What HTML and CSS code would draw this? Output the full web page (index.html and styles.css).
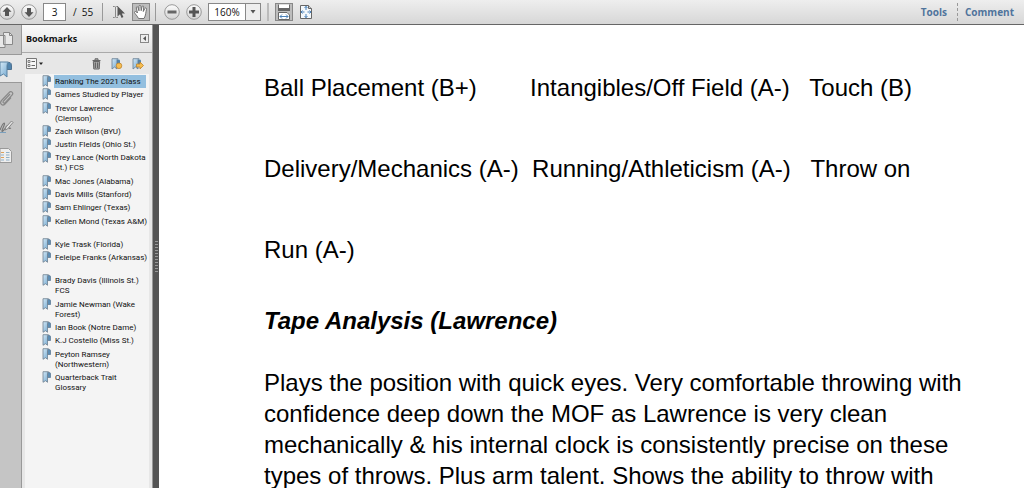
FILE: index.html
```html
<!DOCTYPE html>
<html lang="en">
<head>
<meta charset="utf-8">
<title>Quarterback Guide</title>
<link rel="stylesheet" href="styles.css">
</head>
<body>
<svg class="defs" aria-hidden="true">
  <defs>
    <linearGradient id="blue" x1="0" x2="1" y2="1"><stop offset="0" stop-color="#d5e9f6"/><stop offset="1" stop-color="#6fa6cf"/></linearGradient>
    <linearGradient id="disc" x2="0" y2="1"><stop offset="0" stop-color="#fdfdfd"/><stop offset="1" stop-color="#d2d2d2"/></linearGradient>
    <symbol id="mark" viewBox="0 0 9 12"><path d="M5.500 1.500h2q1 0 1 1.500v3.500H5.500z" fill="#5d8db4" stroke="#55748f" stroke-width=".7"/><path d="M1 .7h5.500q-1 .5-1 2v8.600L3.500 9.700 1 11.300z" fill="url(#blue)" stroke="#6d7f8f" stroke-width=".8"/></symbol>
  </defs>
</svg>
<header class="toolbar">
  <div class="group nav">
    <button class="tool" aria-label="Previous page"><svg width="16" height="16" viewBox="0 0 16 16"><circle cx="8" cy="8" r="7.300" fill="url(#disc)" stroke="#999"/><path d="M8 3l4.500 4.800H10V12H6V7.800H3.500z" fill="#555"/></svg></button>
    <button class="tool" aria-label="Next page"><svg width="16" height="16" viewBox="0 0 16 16"><circle cx="8" cy="8" r="7.300" fill="url(#disc)" stroke="#999"/><path d="M8 13l4.500-4.800H10V4H6v4.200H3.500z" fill="#555"/></svg></button>
  </div>
  <input class="field page-no" aria-label="Page number" value="3">
  <span class="count">/&nbsp; 55</span>
  <span class="sep"></span>
  <div class="group modes">
    <button class="tool" aria-label="Select text"><svg width="16" height="16" viewBox="0 0 16 16"><path d="M1 2.500h1.500L3.500 3l1-.5H6M3.500 3v10M1 13.500h1.500l1-.5 1 .5H6" fill="none" stroke="#888"/><path d="M5.500 2v10.500L8 10.300l1.600 3.600 1.800-.8-1.600-3.500h3.200z" fill="#555"/></svg></button>
    <button class="tool pressed" aria-label="Hand tool"><svg width="16" height="16" viewBox="0 0 16 16"><path d="M5.500 14.500C4.500 12 2 10 1.500 8.500c0-1.500 1.500-1.300 3 .5L3.300 4c-.2-1.500 1.300-1.700 1.700-.5l1 3.300L6 2.300c0-1.300 1.700-1.300 1.800 0l.4 4.400.8-4c.3-1.200 1.900-.9 1.700.4L10.300 7.500l1.600-3c.6-1.100 2-.4 1.600.8-.8 2.500-.5 6-2.500 9.200z" fill="#fff" stroke="#666" stroke-width=".9"/></svg></button>
  </div>
  <span class="sep"></span>
  <div class="group zooms">
    <button class="tool" aria-label="Zoom out"><svg width="16" height="16" viewBox="0 0 16 16"><circle cx="8" cy="8" r="7.300" fill="url(#disc)" stroke="#999"/><path d="M3.500 6.500h9v3h-9z" fill="#666"/></svg></button>
    <button class="tool" aria-label="Zoom in"><svg width="16" height="16" viewBox="0 0 16 16"><circle cx="8" cy="8" r="7.300" fill="url(#disc)" stroke="#999"/><path d="M3 6.500h3.500V3h3v3.500H13v3H9.500V13h-3V9.500H3z" fill="#555"/></svg></button>
  </div>
  <div class="combo">
    <input class="field zoom" aria-label="Zoom level" value="160%">
    <button class="drop" aria-label="Zoom levels"><svg width="6" height="4" viewBox="0 0 6 4"><path d="M.5 0h5L3 3.500z" fill="#555"/></svg></button>
  </div>
  <span class="sep wide"></span>
  <div class="group fits">
    <button class="tool pressed" aria-label="Fit width"><svg width="16" height="16" viewBox="0 0 16 16"><path d="M2.500.5v5h11v-5M2.500 15.500v-7h8.500l2.500 2.500v4.500z" fill="#fff" stroke="#666"/><path d="M2 4h12v3H2z" fill="#666"/><path d="M4 12.500h8M6 10.500l-2 2 2 2M10 10.500l2 2-2 2" fill="none" stroke="#4b81b8"/></svg></button>
    <button class="tool" aria-label="Fit page"><svg width="14" height="16" viewBox="0 0 14 16"><path d="M1.500 1.500h8l3 3v10h-11z" fill="#f4f8fb" stroke="#666"/><path d="M9.500 1.500v3h3" fill="#ccc" stroke="#666"/><path d="M7 2v4M7 10v4M2 8h3.500M8.500 8H12M5.500 4L7 2.500 8.500 4M5.500 12L7 13.500 8.500 12M3.500 6.500L2 8l1.500 1.500M10.500 6.500L12 8l-1.500 1.500" fill="none" stroke="#4b81b8"/></svg></button>
  </div>
  <nav class="panes"><a href="#tools">Tools</a><a href="#comment">Comment</a></nav>
</header>
<main class="workspace">
  <nav class="rail" aria-label="Panels">
    <button class="tab" aria-label="Pages"><svg width="14" height="18" viewBox="0 0 14 18"><path d="M0 4.500h5v12H0M3.500 1.500h6l3 3v9h-9z" fill="#e8e8e8" stroke="#888"/><path d="M9.500 1.500v3h3" fill="none" stroke="#888"/></svg></button>
    <button class="tab current" aria-label="Bookmarks"><svg width="14" height="18" viewBox="0 0 14 18"><path d="M7 2.500h3Q11.500 3 11.500 6v3.500H7z" fill="#5184ad" stroke="#4d7191"/><path d="M0 2h8.500Q7 3 7 6v11l-3.500-3L0 16z" fill="url(#blue)" stroke="#5a82a2"/></svg></button>
    <button class="tab" aria-label="Attachments"><svg width="14" height="18" viewBox="0 0 14 18"><path d="M10 5L3.500 12c-1.200 1.500.4 3 1.700 1.600L12 6.200c2-2.200-.8-5-3-2.600L1.500 11.500c-2.500 3 1 6 3.500 3.500L11 8.500" fill="none" stroke="#888" stroke-width="1.200"/></svg></button>
    <button class="tab" aria-label="Signatures"><svg width="14" height="18" viewBox="0 0 14 18"><path d="M0 12C4 2 6 4 3 10s1 3 3-1 2 3 5 1" fill="none" stroke="#777" stroke-width="1.200"/><path d="M5 12l1-3 5.500-6L13 4.500 7.500 11z" fill="#e2e2e2" stroke="#888"/><path d="M0 14.500h6" stroke="#7ba0bd"/></svg></button>
    <button class="tab" aria-label="Content"><svg width="14" height="18" viewBox="0 0 14 18"><path d="M0 1.500h8.500l3 3v11H0z" fill="#eee" stroke="#999"/><path d="M1 5.500h3M1 10.500h3" stroke="#dda15c"/><path d="M6 5.500h3.500M6 8h3.500M6 10.500h3.500M6 13h3.500M1 8h3M1 13h3" stroke="#8fb0c8"/></svg></button>
  </nav>
  <aside class="panel">
    <div class="panel-head"><h2>Bookmarks</h2><button class="collapse" aria-label="Collapse panel"><svg width="3" height="5" viewBox="0 0 3 5"><path d="M3 0v5L0 2.500z" fill="#555"/></svg></button></div>
    <div class="panel-tools">
      <button class="tool options" aria-label="Options"><svg width="17" height="11" viewBox="0 0 17 11"><path d="M.5.500h10v10H.5z" fill="#f7f7f7" stroke="#777"/><path d="M2 2.500h2v2H2zM2 6.500h2v2H2z" fill="none" stroke="#666" stroke-width=".8"/><path d="M5.500 3.500H9M5.500 7.500H9" stroke="#666"/><path d="M13 4.500h4l-2 2.500z" fill="#222"/></svg></button>
      <button class="tool" aria-label="Delete bookmark"><svg width="12" height="12" viewBox="0 0 12 12"><path d="M2.500 2.500h8M5 2V.8h3V2M3.300 3.500l.5 7.500h5.400l.5-7.500z" fill="#aaa" stroke="#666"/><path d="M5.300 4.500V10M7.700 4.500V10" stroke="#555"/></svg></button>
      <button class="tool" aria-label="New bookmark"><svg width="12" height="12" viewBox="0 0 12 12"><path d="M6 1.500h2q1 0 1 1.500v3H6z" fill="#5283ab"/><path d="M1 .7h6q-1 .5-1 2V11L3.500 9 1 11z" fill="url(#blue)" stroke="#657c90" stroke-width=".8"/><circle cx="8" cy="7.800" r="2.800" fill="#f6bd4f" stroke="#bd8430" stroke-width=".8"/></svg></button>
      <button class="tool" aria-label="Go to bookmark"><svg width="12" height="12" viewBox="0 0 12 12"><path d="M6 1.500h2q1 0 1 1.500v3H6z" fill="#5283ab"/><path d="M1 .7h6q-1 .5-1 2V11L3.500 9 1 11z" fill="url(#blue)" stroke="#657c90" stroke-width=".8"/><path d="M4.500 6H8V4l3.500 3.500L8 11V9H4.500z" fill="#f6bd4f" stroke="#bd8430" stroke-width=".8"/></svg></button>
    </div>
    <div class="list">
    <ul class="marks">
      <li class="selected"><svg><use href="#mark"/></svg><a href="#p1">Ranking The 2021 Class</a></li>
      <li><svg><use href="#mark"/></svg><a href="#p2">Games Studied by Player</a></li>
      <li><svg><use href="#mark"/></svg><a href="#p3">Trevor Lawrence<br>(Clemson)</a></li>
      <li><svg><use href="#mark"/></svg><a href="#p4">Zach Wilson (BYU)</a></li>
      <li><svg><use href="#mark"/></svg><a href="#p5">Justin FIelds (Ohio St.)</a></li>
      <li><svg><use href="#mark"/></svg><a href="#p6">Trey Lance (North Dakota<br>St.) FCS</a></li>
      <li><svg><use href="#mark"/></svg><a href="#p7">Mac Jones (Alabama)</a></li>
      <li><svg><use href="#mark"/></svg><a href="#p8">Davis Mills (Stanford)</a></li>
      <li><svg><use href="#mark"/></svg><a href="#p9">Sam Ehlinger (Texas)</a></li>
      <li class="tall"><svg><use href="#mark"/></svg><a href="#p10">Kellen Mond (Texas A&amp;M)</a></li>
      <li><svg><use href="#mark"/></svg><a href="#p11">Kyle Trask (Florida)</a></li>
      <li class="tall"><svg><use href="#mark"/></svg><a href="#p12">Feleipe Franks (Arkansas)</a></li>
      <li><svg><use href="#mark"/></svg><a href="#p13">Brady Davis (Illinois St.)<br>FCS</a></li>
      <li><svg><use href="#mark"/></svg><a href="#p14">Jamie Newman (Wake<br>Forest)</a></li>
      <li><svg><use href="#mark"/></svg><a href="#p15">Ian Book (Notre Dame)</a></li>
      <li><svg><use href="#mark"/></svg><a href="#p16">K.J Costello (Miss St.)</a></li>
      <li><svg><use href="#mark"/></svg><a href="#p17">Peyton Ramsey<br>(Northwestern)</a></li>
      <li><svg><use href="#mark"/></svg><a href="#p18">Quarterback Trait<br>Glossary</a></li>
    </ul>
    </div>
  </aside>
  <div class="splitter"><span class="grip"></span></div>
  <article class="document">
    <p class="grades">Ball Placement (B+)        Intangibles/Off Field (A-)   Touch (B)</p>
    <p class="grades">Delivery/Mechanics (A-)  Running/Athleticism (A-)   Throw on</p>
    <p class="grades">Run (A-)</p>
    <h1>Tape Analysis (Lawrence)</h1>
    <p>Plays the position with quick eyes. Very comfortable throwing with<br>confidence deep down the MOF as Lawrence is very clean<br>mechanically &amp; his internal clock is consistently precise on these<br>types of throws. Plus arm talent. Shows the ability to throw with</p>
  </article>
</main>
</body>
</html>
```
FILE: styles.css
```css
* { box-sizing: border-box; }
body {
  margin: 0;
  height: 100vh;
  display: flex;
  flex-direction: column;
  overflow: hidden;
  font-family: "Open Sans", "Noto Sans", sans-serif;
  font-size: 8px;
  color: #111;
  background: #fff;
}
button { padding: 0; border: 0; background: none; font: inherit; color: inherit; }
button, .group { display: flex; align-items: center; justify-content: center; }
a { color: inherit; text-decoration: none; }
.defs { position: absolute; width: 0; height: 0; }

.toolbar {
  flex: none;
  display: flex;
  align-items: center;
  height: 25px;
  background: linear-gradient(#eeeeee, #d7d7d7);
  border-bottom: 1px solid #666;
}
.tool { flex: none; height: 18px; }
.pressed { width: 18px; background: #bdbdbd; border: 1px solid #888; }
.nav { gap: 6px; margin: 0 6px 0 -1px; }
.field {
  height: 18px;
  padding: 0;
  border: 1px solid #888;
  background: #fff;
  font: 10px "Open Sans", "Noto Sans", sans-serif;
  text-align: center;
  color: #111;
}
.page-no { width: 23px; }
.count { width: 32px; padding-left: 7px; font-size: 10px; white-space: nowrap; }
.sep { width: 1px; height: 18px; margin: 0 4px; background: #999; }
.sep.wide { width: 2px; margin: 0 6px; background: #bbb; }
.modes { gap: 4px; margin: 0 1px 0 5px; }
.zooms { gap: 6px; margin: 0 6px 0 4px; }
.combo { display: flex; }
.zoom { width: 38px; }
.drop { width: 15px; height: 18px; border: 1px solid #888; border-left: 0; background: #eee; }
.fits { gap: 6px; }
.panes { display: flex; margin-left: auto; font-size: 10px; font-weight: 700; line-height: 18px; color: #50749c; }
.panes a { padding: 0 10px; }
.panes a + a { padding-left: 7px; border-left: 1px dashed #999; }

.workspace { flex: 1; display: flex; min-height: 0; }
.rail { flex: none; width: 22px; background: #c5c5c5; border-right: 1px solid #999; }
.tab { width: 22px; height: 29px; justify-content: flex-start; }
.tab.current { background: #e7e7e7; border: 1px solid #999; border-width: 1px 0; }
.panel { flex: none; width: 130px; display: flex; flex-direction: column; background: #e7e7e7; }
.panel-head {
  display: flex;
  align-items: center;
  justify-content: space-between;
  height: 28px;
  padding: 0 3px 0 4px;
  background: linear-gradient(#fafafa, #e2e2e2);
  border-bottom: 1px solid #aaa;
}
h2 { margin: 0; font-size: 9px; }
.collapse { width: 9px; height: 9px; border: 1px solid #888; background: #eee; }
.panel-tools { display: flex; align-items: center; gap: 9px; height: 21px; padding: 0 8px 0 4px; }
.options { margin-right: auto; }
.list { flex: 1; margin: 0 3px; padding: 1px 0 0 17px; background: #f4f4f4; }
.marks {
  min-height: 319px;
  margin: 0;
  padding: 0;
  list-style: none;
  display: flex;
  flex-direction: column;
  justify-content: space-between;
  font-family: Roboto, "Open Sans", sans-serif;
}
.marks li { display: flex; gap: 3px; line-height: 10px; }
.marks svg { flex: none; width: 9px; height: 12px; }
.marks a { padding: 2px 1px 1px; white-space: nowrap; }
.marks .tall { min-height: 23px; }
.tall a { align-self: flex-start; }
.selected a { flex: 1; margin-right: 3px; background: #93bfdf; }

.splitter {
  flex: none;
  width: 7px;
  display: flex;
  align-items: center;
  justify-content: center;
  background: #555;
  border-left: 1px solid #999;
}
.grip { width: 3px; height: 32px; background: repeating-linear-gradient(#999 0 1px, #555 1px 3px); }

.document {
  flex: 1;
  min-width: 0;
  padding: 47px 24px 0 105px;
  font-family: "Liberation Sans", Arial, sans-serif;
  font-size: 24px;
  line-height: 31px;
  color: #000;
}
.document p { margin: 0; white-space: nowrap; }
.document .grades { margin-bottom: 50px; white-space: pre; }
h1 { margin: -10px 0 31px; font-size: 24px; font-style: italic; }
```
